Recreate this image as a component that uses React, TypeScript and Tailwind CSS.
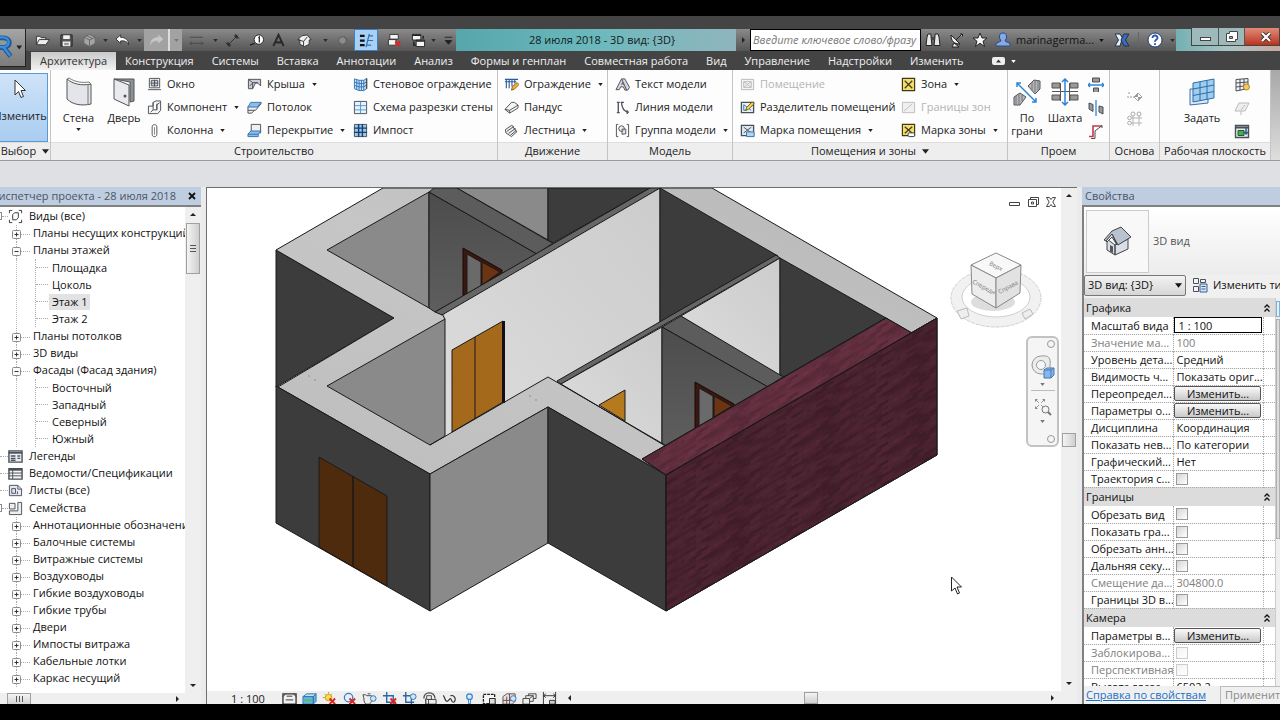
import type { ReactNode } from "react";
import { clsx } from "clsx";

/* ---------- icons (16x16 grid) ---------- */

const INK = "#4b4f57";
const BLUE = "#2f74b5";

const ICONS: Record<string, ReactNode> = {
  open: <path d="M1.500 12.500V3.500h4l1 1.500h5v2M1.500 12.500l3-5.500h11l-4 5.500z" fill="#eee" stroke="#333" />,
  save: (
    <>
      <path d="M2 2h12v12H2z" fill="#555" stroke="#222" />
      <path d="M4.500 2.500h7v4h-7zM4 9h8v5H4z" fill="#f2f2f2" />
      <path d="M5.500 11h5M5.500 12.500h5" stroke="#777" />
    </>
  ),
  cloud: (
    <>
      <path d="M8 1.500l6 3v6.500L8 14.500 2 11V4.500z" fill="#a5a5a5" stroke="#666" />
      <path d="M2 4.500l6 3 6-3M8 7.500v7M5 3l6 3" stroke="#666" fill="none" />
    </>
  ),
  undo: <path d="M6 2L1 6.500 6 11V8.500c4-.500 7 .500 8.500 4C14.500 7.500 11 4.800 6 4.600z" fill="#fff" stroke="#333" />,
  redo: <path d="M10 2l5 4.500-5 4.500V8.500c-4-.500-7 .500-8.500 4C1.500 7.500 5 4.800 10 4.600z" fill="#c8c8c8" stroke="#bbb" />,
  measure: <path d="M1 4.500h14M1 11h14M3 9l-2 2 2 2M13 9l2 2-2 2" stroke="#4a4a4a" fill="none" />,
  dim: <path d="M3 13L13 3M1 10l4 5M11 1l4 5M5 11l-2 2M3 10v3h3z M10 3h3v3z" stroke="#2e2e2e" fill="#2e2e2e" />,
  tag: (
    <>
      <circle cx="10.500" cy="7" r="5" fill="#fff" stroke="#222" />
      <path d="M1 13l5-2M10 5l1-.800V10" stroke="#222" fill="none" strokeWidth="1.300" />
    </>
  ),
  letterA: <path d="M2.500 14L8 2l5.500 12M4.500 10h7" stroke="#2b2b2b" strokeWidth="2.200" fill="none" />,
  house: (
    <>
      <path d="M1 7l4-4 6-1 4 5-2 .500V12l-5 2.500L3 12V7.500z" fill="#eee" stroke="#333" />
      <path d="M1 7l6 2 4-5M7 9v5" stroke="#333" fill="none" />
    </>
  ),
  section: (
    <>
      <path d="M2 8h4M10 4l5 4-5 4z" fill="#666" stroke="#666" />
      <circle cx="8" cy="8" r="4" fill="#8c8c8c" stroke="#5c5c5c" />
    </>
  ),
  thin: (
    <>
      <path d="M1 3h5M1 8h5M1 13h5" stroke="#111" strokeWidth="2.400" />
      <path d="M10 3h5M9 8h6M8 13h5M11 1L7.500 15" stroke={BLUE} strokeWidth="1.300" />
    </>
  ),
  closeHidden: (
    <>
      <path d="M3 1.500h9v5H3zM1.500 7h8v6h-8z" fill="#f4f4f4" stroke="#333" />
      <path d="M9 9l5 5M14 9l-5 5" stroke="#d02a2a" strokeWidth="2.200" />
    </>
  ),
  switchWin: (
    <>
      <path d="M1.500 1.500h9v6h-9zM5.500 7.500h9v7h-9z" fill="#f4f4f4" stroke="#222" />
      <path d="M1.500 2.500h9M5.500 8.500h9M3 9v4h2M13 6V3" stroke="#222" fill="none" strokeWidth="1.500" />
    </>
  ),
  customize: <path d="M4 4.500h8M4.500 8h7L8 12z" fill="#222" stroke="#222" />,
  binoculars: (
    <>
      <path d="M3 2h3v3l1 8.500H1L2 5zM10 2h3l1 3 1 8.500H9L10 5z" fill="#e8e8e8" stroke="#222" />
      <path d="M6.500 5h3v3h-3z" fill="#444" />
    </>
  ),
  dish: <path d="M2 3c0 6 3 9 9 9L6.500 7.500zM7 8l6-6M11 2h2.500v2.500M5 11l-2 4h7z" fill="#eee" stroke="#222" />,
  star: <path d="M8 1l2 5h5l-4 3.300 1.600 5.200L8 11.300l-4.600 3.200L5 9.300 1 6h5z" fill="#f5f5f5" stroke="#222" />,
  user: <path d="M8 1c3 0 4 2 3.500 5L10 9l5 2.500V14H1v-2.500L6 9 4.500 6C4 3 5 1 8 1z" fill="#86a9e8" stroke="#2c4a86" />,
  exchange: (
    <>
      <path d="M1 2h5l2.500 4L6 14H1l3.500-6z" fill="#e8eef8" stroke="#234" />
      <path d="M15 2h-5L7 8l3 6h5l-3.500-6z" fill="#3a6bc0" stroke="#234" />
    </>
  ),
  help: (
    <>
      <circle cx="8" cy="8" r="7" fill="#fff" stroke="#1d3c78" />
      <path d="M5.500 6c0-3.500 5.300-3 5 0-.200 1.700-2.500 1.600-2.500 3.800M8 11.200V13" stroke="#2a55a8" strokeWidth="1.900" fill="none" />
    </>
  ),
  window: (
    <>
      <path d="M2.500 1.500h11v10h-11zM1 13.500h14" fill="#fff" stroke={INK} />
      <path d="M4.500 3.500h7v6h-7zM8 3v7M4 6.500h8" fill="#c9ccd6" stroke={INK} />
    </>
  ),
  component: <path d="M1.500 6.500h5v-4l3-1.500h5v10l-3 3.500h-10zM6.500 2.500v8h4V4M6.500 10.500L4 13M10.500 10.500V5l3-2" fill="#f5f5f5" stroke={INK} />,
  column: (
    <>
      <path d="M5.500 4c0-3 5-3 5 0v8c0 3.500-5 3.500-5 0z" fill="#fff" stroke={INK} />
      <path d="M8 4.500v8" stroke="#888" />
    </>
  ),
  roof: (
    <>
      <path d="M1.500 2.500h13v7l-3-3H9l-3 6H1.500z" fill="#ccced4" stroke={INK} />
      <path d="M1.500 2.500L6 6h5.500M6 6v6.500M3 9.500l3-3" stroke={INK} fill="none" />
    </>
  ),
  ceiling: (
    <>
      <path d="M1 7v4h8l6-7V2.500M1 11v3h4l3-3" stroke={INK} fill="#eee" />
      <path d="M4 2.500h11l-4 5H1z" fill="#8fbce8" stroke={BLUE} />
    </>
  ),
  floor: (
    <>
      <path d="M4.500 1.500h10v9h-10z" fill="#eef1f4" stroke={INK} />
      <path d="M1 12l3-3.500h11L12 12v2.500H1z" fill="#8fbce8" stroke={BLUE} />
      <path d="M1 12h11" stroke={BLUE} />
    </>
  ),
  curtain: (
    <>
      <path d="M1.500 2l5 1.500h5l3-2v11l-3 2h-5l-5-2z" fill="#cfe4f7" stroke={BLUE} />
      <path d="M4 3v10.500M6.500 3.500v11M9 3.500v11M11.500 3.500v11M1.500 5.500l5 1.500h5l3-2M1.500 9l5 1.500h5l3-2" stroke={BLUE} fill="none" />
      <path d="M14.500 1.500v11" stroke={INK} strokeWidth="1.500" />
    </>
  ),
  grid: (
    <>
      <path d="M1.500 1.500h13v13h-13z" fill="#e8f2fb" stroke={INK} />
      <path d="M8 2v12M2 6h12M2 10.500h12" stroke="#4c97d8" />
    </>
  ),
  mullion: (
    <>
      <path d="M1.500 1.500h13v13h-13z" fill="#9cc6ea" stroke={INK} />
      <path d="M6 1v14M10 1v14M1 5.500h14M1 10h14" stroke="#173f70" strokeWidth="1.500" />
    </>
  ),
  railing: (
    <>
      <path d="M1 2.500h14M1 5h12M2.500 2v10M5.500 2v10M8.500 2v8M11.500 2v5" stroke="#2c5b9c" strokeWidth="1.200" />
      <path d="M8 14l1-4 5-4 2 2-5 5z" fill="#f4b23a" stroke="#8a5a10" />
    </>
  ),
  ramp: <path d="M1 10L8 2.500h3l4 3v3L6 14zM1 10l5 1M6 14v-3l9-5.500" fill="#f5f5f5" stroke={INK} />,
  stair: <path d="M1.500 7L8 2.500l2 1v2l2 .500v2l2 1-6 5.500-6-4zM3 9l7-5M5 11l7-5M7 13l6-5" fill="#eee" stroke={INK} />,
  modelText: (
    <>
      <path d="M1 13.500L7 2h3.500l5 9-2 3h-3L9 10.500H6l-1.500 3z" fill="#d5d7dc" stroke={INK} />
      <path d="M7 2l5.500 12M7 8l1-2 1 2.500" stroke={INK} fill="none" />
    </>
  ),
  modelLine: <path d="M3.500 2v12M2 2.500h3M2 13.500h3M7 2c0 6 2 10 8 11M9.500 2.500H6M13 11v4" stroke={INK} fill="none" strokeWidth="1.400" />,
  modelGroup: (
    <>
      <path d="M3.500 1.500h-2v13h2M12.500 1.500h2v13h-2" stroke={INK} fill="none" />
      <circle cx="7" cy="6" r="3" fill="#eee" stroke={INK} />
      <path d="M7.500 6.500h4v5l-4 .500z" fill="#ddd" fillOpacity=".7" stroke={INK} />
    </>
  ),
  roomOff: <path d="M1.500 2.500h13v11h-13zM4 5h8v6H4zM4 5l8 6M12 5l-8 6" fill="#f3f3f3" stroke="#b9b9b9" />,
  roomSplit: (
    <>
      <path d="M1.500 2.500h13v11h-13z" fill="#e8f1f8" stroke={INK} strokeWidth="1.400" />
      <path d="M4 5v6h3M4 5l8 6" stroke={BLUE} fill="none" />
      <path d="M6 11l1-3 6-6 2 2-6 6z" fill="#f7d34a" stroke="#6b5510" />
    </>
  ),
  roomTag: (
    <>
      <path d="M1.500 2.500h13v11h-13z" fill="#dfe9f2" stroke={INK} strokeWidth="1.400" />
      <path d="M4 4.500l8 6M12 4.500l-8 6" stroke={INK} />
      <path d="M7 9.500h8v5H7z" fill="#b9d3ea" stroke={BLUE} />
    </>
  ),
  zone: <path d="M1.500 1.500h13v13h-13zM4 4l8 8M12 4l-8 8" fill="#f5df6a" stroke="#3f3a1c" strokeWidth="1.300" />,
  zoneOff: <path d="M1.500 2.500h13v11h-13zM3 12l9-8" fill="#f0f0f0" stroke="#bdbdbd" />,
  zoneTag: (
    <>
      <path d="M1.500 1.500h13v12h-13zM4 4l8 7M12 4l-8 7" fill="#f5df6a" stroke="#3f3a1c" strokeWidth="1.300" />
      <rect x="7.500" y="10.500" width="7" height="4" rx="1.500" fill="#fff" stroke="#334" />
    </>
  ),
  openWall: (
    <>
      <path d="M4.500 1h7v4h-7zM5.500 15v-4h5v4" fill="#999" stroke={INK} />
      <path d="M0 8h16M2 6L0 8l2 2M14 6l2 2-2 2" stroke="#2e86d8" fill="none" strokeWidth="1.300" />
    </>
  ),
  openVert: (
    <>
      <path d="M1 3l4 1.500v7L1 9zM11 6l4 1v7l-4-2z" fill="#999" stroke={INK} />
      <path d="M8 0v16" stroke="#2e86d8" strokeWidth="1.300" />
    </>
  ),
  dormer: (
    <>
      <path d="M1 13.500h4V3h9" stroke="#c23a4c" fill="none" strokeWidth="1.600" />
      <path d="M3 15.500h4V8l7-5.500V5" stroke={INK} fill="none" />
    </>
  ),
  level: (
    <>
      <path d="M0 9h7M2 4v3" stroke="#999" strokeDasharray="2 1" />
      <path d="M11 5l4 4-4 4-4-4z" fill="#fff" stroke="#aaa" />
      <path d="M11 5v4H7zM11 13V9h4z" fill="#999" />
    </>
  ),
  axes: (
    <>
      <path d="M6 4v11M12 4v11M3 7h12M3 12h12" stroke="#b5b5b5" />
      <circle cx="6" cy="3" r="2" fill="#fff" stroke="#aaa" />
      <circle cx="12" cy="3" r="2" fill="#fff" stroke="#aaa" />
      <circle cx="2.500" cy="7" r="1.800" fill="#fff" stroke="#aaa" />
      <circle cx="2.500" cy="12" r="1.800" fill="#fff" stroke="#aaa" />
    </>
  ),
  planeShow: (
    <>
      <path d="M2 2.500l12-1v10L2 14zM6 2v11.500M10 2v10.500M2 6l12-1M2 10l12-1.500" fill="#f2f2f2" stroke={INK} />
      <circle cx="12.500" cy="10" r="3" fill="#f6c95a" stroke="#b3862a" />
    </>
  ),
  planeRef: <path d="M5 3h10l-4 8H1zM7 11v4M11 5l-4 5" fill="#eee" stroke="#bbb" />,
  planeView: (
    <>
      <path d="M1.500 2.500h13v12h-13z" fill="#e6efe6" stroke={INK} strokeWidth="1.400" />
      <path d="M2 4.500h12" stroke={INK} strokeWidth="2" />
      <path d="M4 7.500h6v5H4z" fill="#4ca85a" stroke="#225c2c" />
      <path d="M12 5v6M10 9l2 2 2-2" stroke="#2b5d8f" fill="none" strokeWidth="1.500" />
    </>
  ),
  viewsRoot: (
    <>
      <path d="M1.500 4.500v-3h3M11.500 1.500h3v3M14.500 11.500v3h-3M4.500 14.500h-3v-3" stroke="#333" fill="none" />
      <path d="M5 6l2-2h4v5l-2 2.500H5z" fill="#fff" stroke="#333" />
    </>
  ),
  legends: (
    <>
      <path d="M1 2h14v12H1z" fill="#eceef2" stroke={INK} strokeWidth="1.500" />
      <path d="M1 4h14" stroke={INK} strokeWidth="2" />
      <path d="M3 7.500h5M3 10h5M3 12h5M10 7.500h3M10 10h3" stroke="#456" strokeWidth="1.500" />
    </>
  ),
  schedules: (
    <>
      <path d="M1 3h14v11H1z" fill="#f4f4f4" stroke={INK} strokeWidth="1.500" />
      <path d="M1 4h14" stroke={INK} strokeWidth="2" />
      <path d="M5 3v11M1 7.500h14M1 10.500h14" stroke={INK} />
    </>
  ),
  sheets: <path d="M1.500 2.500h9l4 4v7h-13zM10.500 2.500v4h4M4 6h4v5H4zM10 9v3" fill="#e3e8f2" stroke={INK} />,
  families: <path d="M1.500 2.500h6v6h-6zM10.500 1.500h4v13h-13v-4h9z" fill="#eee" stroke={INK} />,
  typeEdit: (
    <>
      <path d="M1.500 1.500h5v5h-5zM8.500 2.500h5v3h-5zM1.500 9.500h5v5h-5z" fill="#f4f4f4" stroke={INK} />
      <path d="M8 7h7v8H8z" fill="#dbe7f5" stroke="#345f9a" />
      <path d="M9.500 9.500h4M9.500 12h4" stroke="#345f9a" />
    </>
  ),
  sheetSize: (
    <>
      <path d="M1 3h14v11H1z" fill="#f0f0f0" stroke="#333" strokeWidth="1.400" />
      <path d="M4 9.500h8M1 6l3-3M15 6l-3-3M5 5.500h6" stroke="#333" fill="none" />
    </>
  ),
  vcCube: (
    <>
      <path d="M1 6l4-3h10l-3 3z" fill="#bfe0f5" stroke={BLUE} />
      <path d="M1 6h11v8H1zM12 6l3-3v8l-3 3z" fill="#6bb3dc" stroke={BLUE} />
      <path d="M2 10h9" stroke="#4cc06c" strokeWidth="2" />
    </>
  ),
  vcSun: (
    <>
      <circle cx="7" cy="7" r="3.500" fill="#f7e04b" stroke="#c59a18" />
      <path d="M7 1v2M1 7h2M3 3l1 1M11 3l-1 1" stroke="#c59a18" />
      <path d="M8 8l6 6M14 8l-6 6" stroke="#d22" strokeWidth="2" />
    </>
  ),
  vcShadow: (
    <>
      <circle cx="7" cy="7" r="4.500" fill="#e4effa" stroke="#3b7dc0" strokeWidth="1.300" />
      <path d="M8 8l6 6M14 8l-6 6" stroke="#d22" strokeWidth="2" />
    </>
  ),
  vcRender: (
    <>
      <path d="M1 4h3l1 1h5c2 3 0 7-2 9H4C1 11 3 9 1 4zM6 3h3" fill="#eee" stroke="#444" />
      <circle cx="12" cy="8" r="3" fill="#cfe5f8" stroke={BLUE} />
    </>
  ),
  vcCrop: (
    <>
      <path d="M5 1v11h10M1 5h11v9" stroke="#2c67a8" fill="none" strokeWidth="1.500" />
      <path d="M9 8l6 6M15 8l-6 6" stroke="#d22" strokeWidth="2" />
    </>
  ),
  vcCropShow: (
    <>
      <path d="M4 1v11h9M1 5h9v9" stroke="#2c67a8" fill="none" strokeWidth="1.500" />
      <circle cx="12" cy="6" r="3" fill="#cfe5f8" stroke={BLUE} />
    </>
  ),
  vcLock: (
    <>
      <path d="M2 8c0-8 11-8 12 0M4 8v6h7" fill="none" stroke="#444" strokeWidth="1.300" />
      <path d="M7 9h8v5H7zM5 5h5v4H5z" fill="#eee" stroke="#444" />
    </>
  ),
  vcGlasses: <path d="M1 5c2 0 2 6 4 6s3-3 4-3 1 4 3 4 3-4 1-6-3-1-4-1" fill="none" stroke="#333" strokeWidth="1.300" />,
  vcBulb: (
    <>
      <circle cx="8" cy="6" r="3" fill="#dcecfb" stroke="#2f7fd0" strokeWidth="1.300" />
      <path d="M7 9.500v4h2v-4" stroke="#2f7fd0" fill="#fff" />
    </>
  ),
  vcTemp: (
    <>
      <path d="M1.500 3.500h12v10h-12z" fill="#f4f4f4" stroke="#222" strokeWidth="1.400" strokeDasharray="3 1" />
      <path d="M8 8h6v6H8z" fill="#ddd" stroke="#222" />
    </>
  ),
  vcAnalyt: (
    <>
      <path d="M1 6l4-3h9v8l-3 3H1zM1 10h10M5 6v8M8 3v11" fill="#f3d9d9" stroke="#555" />
      <circle cx="12" cy="8" r="3" fill="#cfe5f8" stroke={BLUE} />
    </>
  ),
  vcBoxes: <path d="M1 8h7v6H1zM4 8V5h8v6H8M7 5V3h8v5h-3M8 8l4-3" fill="#eee" stroke="#444" />,
  vcConstraint: (
    <>
      <path d="M1.500 1v14M14.500 1v14M1.500 5h13M4 3L1.500 5 4 7M12 3l2.500 2L12 7" stroke="#333" fill="none" />
      <path d="M8 10h6v4H8z" fill="#ccc" stroke="#333" />
    </>
  ),
};

function Icon({ name, className = "size-4" }: { name: string; className?: string }) {
  return (
    <svg viewBox="0 0 16 16" className={clsx("shrink-0", className)} fill="none" aria-hidden="true">
      {ICONS[name]}
    </svg>
  );
}

function Caret({ className = "h-[3px] w-[5px]" }: { className?: string }) {
  return (
    <svg viewBox="0 0 6 4" className={clsx("shrink-0", className)} aria-hidden="true">
      <path d="M0 0h6L3 4z" fill="currentColor" />
    </svg>
  );
}

function Arrow({ dir }: { dir: "up" | "down" | "left" | "right" }) {
  const d = {
    up: "M1 5h6L4 2z",
    down: "M1 3h6L4 6z",
    left: "M5 1v6L2 4z",
    right: "M3 1v6l3-3z",
  }[dir];
  return (
    <svg viewBox="0 0 8 8" className="size-2 shrink-0" aria-hidden="true">
      <path d={d} fill="#222" />
    </svg>
  );
}

/* ---------- title bar and tabs ---------- */

type Tool = { icon?: string; w: string; label: string; state?: string };

const QUICK_TOOLS: Tool[] = [
  { icon: "open", w: "w-6", label: "Открыть" },
  { icon: "save", w: "w-6", label: "Сохранить" },
  { icon: "cloud", w: "w-[22px]", label: "Синхронизация" },
  { w: "w-[10px]", label: "Список синхронизации" },
  { icon: "undo", w: "w-6", label: "Отменить" },
  { w: "w-[10px]", label: "Список отмены" },
  { icon: "redo", w: "w-6", label: "Повторить", state: "bg-[#a2a2a2]" },
  { w: "w-[14px]", label: "Список повтора", state: "bg-[#a2a2a2] border-l-2 border-[#ddd] text-[#777]" },
  { icon: "measure", w: "w-7", label: "Измерить" },
  { w: "w-[10px]", label: "Список измерений" },
  { icon: "dim", w: "w-6", label: "Размер" },
  { icon: "tag", w: "w-6", label: "Марка" },
  { icon: "letterA", w: "w-5", label: "Текст" },
  { icon: "house", w: "w-8", label: "3D вид" },
  { w: "w-[10px]", label: "Список 3D видов" },
  { icon: "section", w: "w-6", label: "Разрез" },
  { icon: "thin", w: "w-6", label: "Тонкие линии", state: "bg-[#a9d0f5] border border-[#3d7fc0]" },
  { icon: "closeHidden", w: "w-8", label: "Закрыть скрытые окна" },
  { icon: "switchWin", w: "w-4", label: "Переключить окна" },
  { w: "w-[14px]", label: "Список окон" },
  { icon: "customize", w: "w-4", label: "Настроить панель" },
];

function TitleBar() {
  return (
    <div className="flex h-[22px] items-stretch bg-linear-to-b from-[#8a8a8a] to-[#565656] pl-1 text-[#2a2a2a]">
      {QUICK_TOOLS.map((tool) => (
        <button
          key={tool.label}
          aria-label={tool.label}
          className={clsx("flex shrink-0 items-center justify-center", tool.w, tool.state)}
        >
          {tool.icon ? <Icon name={tool.icon} className="size-[15px]" /> : <Caret />}
        </button>
      ))}
      <h1 className="flex min-w-0 flex-1 items-center justify-center truncate bg-linear-to-r from-[#56a6ab] via-[#6cb9bd] to-[#8fb5bd] pl-3 text-[11px] text-[#101c20]">
        28 июля 2018 - 3D вид: {"{3D}"}
      </h1>
      <div className="flex w-[14px] items-center justify-center">
        <Arrow dir="right" />
      </div>
      <input
        aria-label="Поиск"
        placeholder="Введите ключевое слово/фразу"
        className="w-[171px] border border-black bg-white px-[2px] text-[11px] italic placeholder:text-[#777]"
      />
      <div className="flex w-[255px] shrink-0 items-center">
        <button aria-label="Найти" className="flex w-6 justify-center"><Icon name="binoculars" /></button>
        <button aria-label="Центр связи" className="flex w-6 justify-center"><Icon name="dish" /></button>
        <button aria-label="Избранное" className="flex w-[22px] justify-center"><Icon name="star" /></button>
        <button className="flex items-center gap-[5px] pl-1 text-[11px] text-[#111]">
          <Icon name="user" />
          <span className="w-[78px] text-left">marinagerma...</span>
          <Caret />
        </button>
        <button aria-label="Exchange Apps" className="ml-[6px] flex w-6 justify-center"><Icon name="exchange" /></button>
        <button aria-label="Справка" className="ml-[4px] flex w-8 justify-center border-l border-[#666]"><Icon name="help" /></button>
        <Caret />
      </div>
      <div className="flex w-[104px] shrink-0 justify-end bg-linear-to-r from-[#74b0b2] via-[#a9c5c6] to-[#c6a8a2]">
        <div className="-mt-[2px] flex h-[19px] items-stretch border border-[#444]">
          <button aria-label="Свернуть" className="flex w-[26px] items-center justify-center bg-[#9db9ba]">
            <span className="mt-1 h-[4px] w-[11px] border border-[#444] bg-white" />
          </button>
          <button aria-label="Восстановить" className="flex w-[26px] items-center justify-center border-l border-[#555] bg-[#9db9ba]">
            <svg viewBox="0 0 12 12" className="size-3" aria-hidden="true">
              <path d="M3.500.500h8v8h-2v2h-9v-8h3z" fill="#fff" stroke="#444" />
              <path d="M3.500 5.500h3v2h-3z" fill="#9bb" stroke="#444" />
            </svg>
          </button>
          <button aria-label="Закрыть" className="flex w-[35px] items-center justify-center border-l border-[#555] bg-linear-to-b from-[#e08a78] to-[#b8301c] pl-2">
            <svg viewBox="0 0 12 10" className="h-[10px] w-3" aria-hidden="true">
              <path d="M2 1l8 8M10 1L2 9" stroke="#333" strokeWidth="4" />
              <path d="M2 1l8 8M10 1L2 9" stroke="#fff" strokeWidth="2.200" />
            </svg>
          </button>
        </div>
      </div>
    </div>
  );
}

const TABS = [
  "Архитектура", "Конструкция", "Системы", "Вставка", "Аннотации", "Анализ", "Формы и генплан",
  "Совместная работа", "Вид", "Управление", "Надстройки", "Изменить",
];

function Header() {
  return (
    <header className="flex bg-[#444] pt-[13px]">
      <button aria-label="Меню приложения" className="relative flex h-[38px] w-[26px] shrink-0 overflow-hidden border-r border-b border-[#222] bg-linear-to-b from-[#a5a5a5] to-[#7c7c7c]">
        <svg viewBox="0 0 26 38" className="h-full w-full" aria-hidden="true">
          <path d="M-3 9h6c9 0 9 10 0 10h-6M4 19l7 9" fill="none" stroke="#1c5a9c" strokeWidth="5" />
          <path d="M-3 8.500h6c8 0 8 10 0 10h-6M4 19l6.500 8.500" fill="none" stroke="#3c8fd6" strokeWidth="2.500" />
          <path d="M17 17h6l-3 4z" fill="#222" />
        </svg>
      </button>
      <div className="min-w-0 flex-1">
        <TitleBar />
        <nav className="flex h-[19px] items-end pl-[5px]">
          {TABS.map((tab, i) => (
            <button
              key={tab}
              className={clsx(
                "h-[18px] px-[9px] text-[11px] leading-[18px] whitespace-nowrap",
                i === 0 ? "bg-linear-to-b from-[#c9c9c9] to-[#f2f2f2] text-[#333]" : "text-[#f0f0f0]",
              )}
            >
              {tab}
            </button>
          ))}
          <button aria-label="Свернуть ленту" className="ml-5 flex h-[18px] items-center gap-[6px] text-white">
            <svg viewBox="0 0 13 8" className="h-2 w-[13px]" aria-hidden="true">
              <rect width="13" height="8" rx="2" fill="#eee" />
              <path d="M4 5.500h5L6.500 2.500z" fill="#333" />
            </svg>
            <Caret />
          </button>
        </nav>
      </div>
    </header>
  );
}

/* ---------- ribbon ---------- */

type Cmd = { icon: string; label: string; menu?: boolean; off?: boolean };

function CmdColumn({ items, className }: { items: Cmd[]; className?: string }) {
  return (
    <div className={clsx("flex shrink-0 flex-col", className)}>
      {items.map((c) => (
        <button
          key={c.label}
          disabled={c.off}
          className={clsx("flex h-[23px] items-center gap-[5px] whitespace-nowrap", c.off && "text-[#b4b4b4]")}
        >
          <Icon name={c.icon} className="size-[15px]" />
          {c.label}
          {c.menu && <span className="pl-[2px]"><Caret /></span>}
        </button>
      ))}
    </div>
  );
}

function BigButton({ label, className, menu, children }: { label: string; className?: string; menu?: boolean; children: ReactNode }) {
  return (
    <button className={clsx("flex shrink-0 flex-col items-center text-center leading-[13px]", className)}>
      <span className="flex h-[38px] items-center">{children}</span>
      {label}
      {menu && <span className="pt-1"><Caret /></span>}
    </button>
  );
}

function Panel({ title, menu, className, children }: { title: string; menu?: boolean; className?: string; children: ReactNode }) {
  return (
    <section className="flex min-w-0 flex-col border-r border-[#c4c4c4]">
      <div className={clsx("flex h-[72px] overflow-hidden pt-[3px]", className)}>{children}</div>
      <h2 className="flex h-[18px] items-center justify-center gap-[6px] border-t border-[#ddd] bg-[#eeeeef] whitespace-nowrap">
        {title}
        {menu && <Caret className="h-[5px] w-[7px]" />}
      </h2>
    </section>
  );
}

function IconColumn({ items, className }: { items: [string, string][]; className?: string }) {
  return (
    <div className={clsx("flex shrink-0 flex-col", className)}>
      {items.map(([icon, label]) => (
        <button key={icon} aria-label={label} className="flex h-[23px] items-center justify-center">
          <Icon name={icon} />
        </button>
      ))}
    </div>
  );
}

function Ribbon() {
  return (
    <div className="grid grid-cols-[51fr_447fr_110fr_125fr_275fr_102fr_50fr_111fr_9fr] border-b border-[#9a9a9a] bg-[#fdfdfd] text-[11px] text-[#222]">
      <Panel title="Выбор" menu>
        <button className="-ml-2 flex w-[56px] shrink-0 flex-col items-center border border-[#5b9bd5] bg-linear-to-b from-[#cfe3f8] to-[#a9cdf1]">
          <svg viewBox="0 0 14 22" className="mt-1 mb-2 h-[22px] w-[14px]" aria-hidden="true">
            <path d="M2 2v15l3.500-3.500L8 19.500l2.500-1L8 12.500h4.500z" fill="#fff" stroke="#333" />
          </svg>
          Изменить
        </button>
      </Panel>

      <Panel title="Строительство">
        <BigButton label="Стена" className="w-[55px]" menu>
          <svg viewBox="0 0 28 30" className="h-[30px] w-7" aria-hidden="true">
            <path d="M2 2c6 5 14 7 24 5v20c-9 2-18 1-24-5z" fill="#e3e5ea" stroke="#555" />
            <path d="M2 2l2-1c6 4 13 5 20 4l2 2M23 8v19" fill="none" stroke="#777" />
          </svg>
        </BigButton>
        <BigButton label="Дверь" className="w-[36px]">
          <svg viewBox="0 0 24 30" className="h-[30px] w-6" aria-hidden="true">
            <path d="M2 2h20v22l-4 1V5z" fill="#8d9099" stroke="#555" />
            <path d="M2 2l15 6v21L2 22z" fill="#e8eaee" stroke="#555" />
            <circle cx="13" cy="19" r="1.500" fill="#555" />
          </svg>
        </BigButton>
        <CmdColumn
          className="ml-[5px] w-[100px]"
          items={[
            { icon: "window", label: "Окно" },
            { icon: "component", label: "Компонент", menu: true },
            { icon: "column", label: "Колонна", menu: true },
          ]}
        />
        <CmdColumn
          className="w-[106px]"
          items={[
            { icon: "roof", label: "Крыша", menu: true },
            { icon: "ceiling", label: "Потолок" },
            { icon: "floor", label: "Перекрытие", menu: true },
          ]}
        />
        <CmdColumn
          items={[
            { icon: "curtain", label: "Стеновое ограждение" },
            { icon: "grid", label: "Схема разрезки стены" },
            { icon: "mullion", label: "Импост" },
          ]}
        />
      </Panel>

      <Panel title="Движение" className="pl-[6px]">
        <CmdColumn
          items={[
            { icon: "railing", label: "Ограждение", menu: true },
            { icon: "ramp", label: "Пандус" },
            { icon: "stair", label: "Лестница", menu: true },
          ]}
        />
      </Panel>

      <Panel title="Модель" className="pl-[7px]">
        <CmdColumn
          items={[
            { icon: "modelText", label: "Текст модели" },
            { icon: "modelLine", label: "Линия модели" },
            { icon: "modelGroup", label: "Группа модели", menu: true },
          ]}
        />
      </Panel>

      <Panel title="Помещения и зоны" menu className="pl-[7px]">
        <CmdColumn
          className="w-[161px]"
          items={[
            { icon: "roomOff", label: "Помещение", off: true },
            { icon: "roomSplit", label: "Разделитель помещений" },
            { icon: "roomTag", label: "Марка помещения", menu: true },
          ]}
        />
        <CmdColumn
          items={[
            { icon: "zone", label: "Зона", menu: true },
            { icon: "zoneOff", label: "Границы зон", off: true },
            { icon: "zoneTag", label: "Марка зоны", menu: true },
          ]}
        />
      </Panel>

      <Panel title="Проем">
        <BigButton label="По грани" className="w-[38px]">
          <svg viewBox="0 0 28 28" className="size-7" aria-hidden="true">
            <path d="M15 8l6-6 6 1v8l-5 5zM1 19l6-4 6 4-6 8H1z" fill="#b4b6bb" stroke="#555" />
            <path d="M19 4v8M22 3v11M25 3v9M3 18v8M6 16v10M9 17v6" stroke="#777" />
            <path d="M4 5l19 19M4 9V5h4M23 20v4h-4" stroke="#2e86d8" fill="none" strokeWidth="1.500" />
          </svg>
        </BigButton>
        <BigButton label="Шахта" className="w-[38px]">
          <svg viewBox="0 0 28 28" className="size-7" aria-hidden="true">
            <path d="M1 5h8v5H1zM19 5h8v5h-8zM1 17h8v5H1zM19 17h8v5h-8z" fill="#999" stroke="#555" />
            <path d="M1 13.500h26M9.500 5v18M18.500 5v18" stroke="#555" />
            <path d="M14 2v24M11 4l3-3 3 3M11 24l3 3 3-3" stroke="#2e86d8" fill="none" strokeWidth="1.500" />
          </svg>
        </BigButton>
        <IconColumn
          className="w-6"
          items={[["openWall", "Проем в стене"], ["openVert", "Вертикальный проем"], ["dormer", "Слуховое окно"]]}
        />
      </Panel>

      <Panel title="Основа" className="justify-center">
        <IconColumn className="justify-center" items={[["level", "Уровень"], ["axes", "Ось"]]} />
      </Panel>

      <Panel title="Рабочая плоскость">
        <BigButton label="Задать" className="ml-[14px] w-[56px]">
          <svg viewBox="0 0 28 30" className="h-[30px] w-7" aria-hidden="true">
            <path d="M2 12h5v10h13v4L2 28z" fill="#dfeaf5" stroke="#3a6ea8" />
            <path d="M5 6l21-4v19L5 25z" fill="#9fcdf0" stroke="#2d6ca8" />
            <path d="M12 5v18.500M19 3.500V22M5 12l21-4M5 18.500l21-4" stroke="#2d6ca8" />
          </svg>
        </BigButton>
        <IconColumn
          className="w-6"
          items={[["planeShow", "Показать"], ["planeRef", "Опорная плоскость"], ["planeView", "Просмотр"]]}
        />
      </Panel>
      <div className="bg-linear-to-b from-[#a8a8a8] to-[#dedede]" />
    </div>
  );
}

/* ---------- project browser ---------- */

type Node = { label: string; open?: boolean; icon?: string; selected?: boolean; children?: Node[] };

const leaf = (label: string): Node => ({ label });

const TREE: Node[] = [
  {
    label: "Виды (все)",
    icon: "viewsRoot",
    children: [
      leaf("Планы несущих конструкций"),
      {
        label: "Планы этажей",
        open: true,
        children: [leaf("Площадка"), leaf("Цоколь"), { label: "Этаж 1", selected: true }, leaf("Этаж 2")],
      },
      leaf("Планы потолков"),
      leaf("3D виды"),
      {
        label: "Фасады (Фасад здания)",
        open: true,
        children: [leaf("Восточный"), leaf("Западный"), leaf("Северный"), leaf("Южный")],
      },
    ],
  },
  { label: "Легенды", icon: "legends" },
  { label: "Ведомости/Спецификации", icon: "schedules" },
  { label: "Листы (все)", icon: "sheets" },
  {
    label: "Семейства",
    icon: "families",
    children: [
      "Аннотационные обозначения", "Балочные системы", "Витражные системы", "Воздуховоды", "Гибкие воздуховоды",
      "Гибкие трубы", "Двери", "Импосты витража", "Кабельные лотки", "Каркас несущий",
    ].map(leaf),
  },
];

function Expander({ open }: { open?: boolean }) {
  return (
    <svg viewBox="0 0 21 17" className="h-[17px] w-[21px] shrink-0" aria-hidden="true">
      <path d="M4.500 0v17M9 9.500h9" stroke="#aaa" strokeDasharray="1 1" />
      <rect x=".5" y="5.500" width="8" height="8" rx="1" fill="#fafafa" stroke="#8a8a92" />
      <path d={open ? "M2.500 9.500h4" : "M2.500 9.500h4M4.500 7.500v4"} stroke="#333" />
    </svg>
  );
}

function Browser() {
  return (
    <aside className="flex w-[201px] shrink-0 flex-col overflow-hidden bg-white text-[11px] text-[#111]">
      <div className="flex h-[18px] shrink-0 items-center justify-between overflow-hidden bg-[#bfcde0] pr-[5px] text-[#4a5666]">
        <h2 className="-ml-[9px] whitespace-nowrap">Диспетчер проекта - 28 июля 2018</h2>
        <button aria-label="Закрыть диспетчер">
          <svg viewBox="0 0 8 8" className="size-2" aria-hidden="true">
            <path d="M1 1l6 6M7 1L1 7" stroke="#111" strokeWidth="1.800" />
          </svg>
        </button>
      </div>
      <div className="flex min-h-0 flex-1 border-t-2 border-[#808080]">
        <ul className="min-w-0 flex-1 overflow-hidden whitespace-nowrap">
          {TREE.map((root) => (
            <li key={root.label}>
              <div className={clsx("flex items-center", root.children ? "h-[18px]" : "h-[17px]")}>
                {root.children && <span className="h-2 w-[2px] border border-l-0 border-[#8a8a92]" />}
                <span className={clsx("border-t border-dotted border-[#aaa]", root.children ? "w-[6px]" : "w-2")} />
                <Icon name={root.icon!} className="mr-[6px] size-[15px]" />
                {root.label}
              </div>
              <ul>
                {root.children?.map((node) => (
                  <li key={node.label}>
                    <div className="flex h-[17px] items-center pl-3">
                      <Expander open={node.open} />
                      {node.label}
                    </div>
                    {node.children && (
                      <ul className="flex pb-px pl-4">
                        <li className="w-px border-l border-dotted border-[#bbb]" />
                        <li className="ml-[18px] min-w-0">
                          <ul className="border-l border-dotted border-[#aaa]">
                            {node.children.map((c) => (
                              <li key={c.label} className="flex h-[17px] items-center">
                                <span className="mr-[1px] w-3 border-t border-dotted border-[#aaa]" />
                                <span className={clsx("px-[3px] leading-4", c.selected && "bg-[#e2e2e4]")}>{c.label}</span>
                              </li>
                            ))}
                          </ul>
                        </li>
                      </ul>
                    )}
                  </li>
                ))}
              </ul>
            </li>
          ))}
        </ul>
        <div className="flex w-4 shrink-0 flex-col items-center bg-[#efefef]">
          <div className="flex h-4 items-center"><Arrow dir="up" /></div>
          <div className="flex h-[51px] w-[14px] flex-col items-center justify-center gap-[2px] border border-[#a0a0a0] bg-linear-to-r from-[#f4f4f4] to-[#cfcfcf]">
            <i className="h-px w-[6px] bg-[#555]" />
            <i className="h-px w-[6px] bg-[#555]" />
            <i className="h-px w-[6px] bg-[#555]" />
          </div>
          <div className="mt-auto flex h-4 items-center"><Arrow dir="down" /></div>
        </div>
      </div>
      <div className="flex h-[11px] shrink-0 items-center justify-between bg-[#efefef] pr-5 pl-[7px]">
        <div className="flex h-[11px] w-6 items-center justify-center gap-[2px] border border-b-0 border-[#a0a0a0] bg-linear-to-b from-[#f4f4f4] to-[#d4d4d4]">
          <i className="h-[6px] w-px bg-[#555]" />
          <i className="h-[6px] w-px bg-[#555]" />
          <i className="h-[6px] w-px bg-[#555]" />
        </div>
        <Arrow dir="right" />
      </div>
    </aside>
  );
}

/* ---------- 3D view ---------- */

const BRICK_TONES = ["#5b2a39", "#43202c", "#6a3444", "#4e2431", "#3a1b26", "#613040", "#55303c"];

// Staggered courses of varied bricks, repeated over the wall.
const BRICKS = Array.from({ length: 20 * 8 }, (_, i) => {
  const row = Math.floor(i / 8);
  const col = i % 8;
  return {
    x: col * 12 + (row % 2) * 6 - 6,
    y: row * 3,
    w: 8 + ((i * 7) % 9),
    tone: BRICK_TONES[(i * i * 3 + row * 5 + col) % BRICK_TONES.length],
  };
});

function Building() {
  const dark = "#3c3c3c";
  const mid = "#8a8a8a";
  const band = "#666";
  return (
    <svg viewBox="207 188 854 503" className="block h-full w-full" role="img" aria-label="3D вид здания">
      <defs>
        <linearGradient id="top" x1="0" y1="1" x2="1" y2="0">
          <stop offset="0" stopColor="#bdbdbd" />
          <stop offset=".5" stopColor="#c6c6c6" />
          <stop offset="1" stopColor="#b6b6b6" />
        </linearGradient>
        <linearGradient id="light" x1="0" y1="1" x2="1" y2="0">
          <stop offset="0" stopColor="#dcdcdc" />
          <stop offset="1" stopColor="#cccccc" />
        </linearGradient>
        <linearGradient id="shade" x1="0" y1="0" x2="0" y2="1">
          <stop offset="0" stopColor="#4c4c4c" />
          <stop offset="1" stopColor="#5e5e5e" />
        </linearGradient>
        <pattern id="brick" width="90" height="60" patternUnits="userSpaceOnUse" patternTransform="skewY(-30)">
          <rect width="90" height="60" fill="#4d2431" />
          {BRICKS.map((b, i) => (
            <rect key={i} x={b.x} y={b.y} width={b.w} height="3" fill={b.tone} opacity=".45" />
          ))}
        </pattern>
      </defs>
      <g stroke="#1a1a1a" strokeWidth="1" strokeLinejoin="round">
        <path d="M276 250L394 318 276 387z" fill={dark} />
        <path d="M276 250L383 188H712L937 318 666 475 548 407 430 474 278 387 394 318z" fill="url(#top)" />

        {/* upper left room */}
        <path d="M327 250L429 192V308z" fill={mid} />
        <path d="M429 192L537 254 435 312 429 308z" fill="url(#shade)" />
        <path d="M434 188H457L547 240 553 243 537 254 429 192z" fill="#5c5c5c" />
        <path d="M457 188H548V240z" fill={mid} />
        <path d="M548 188H650L553 243 548 240z" fill={dark} />
        <path d="M463 248l39 22v4l-39 22z" fill="#3a1710" stroke="#1b0a06" />
        <path d="M467 254l14 8v24l-14 8z" fill="#6a6a6a" />
        <path d="M482 262l18 10-18 13z" fill="#6b3413" />

        {/* hall */}
        <path d="M435 312L650 188h10L442 315z" fill={band} />
        <path d="M445 314L660 189V322L557 382 548 377 447 436h-2z" fill="url(#light)" stroke="none" />
        <path d="M660 188V322M442 314L445 319" />
        <path d="M327 386L445 319V436L430 445z" fill={mid} />
        <path d="M660 188l118 68L660 323z" fill={dark} />
        <path d="M557 381L776 255l4 3L561 384z" fill={band} />
        <path d="M662 327l19-11L784 376 768 387z" fill="#5c5c5c" />
        <path d="M452 350l51-29v81l-51 30z" fill="#a5691c" />
        <path d="M475 337v82" />
        <path d="M503.500 321v82" stroke="#140d18" strokeWidth="3" />

        {/* right rooms */}
        <path d="M681 316L780 258V375z" fill="url(#light)" />
        <path d="M780 258L886 318 784 377 780 375z" fill={dark} />
        <path d="M561 384L662 327V444z" fill="url(#light)" />
        <path d="M599 405l26-15v31z" fill="#b57a1e" />
        <path d="M662 327L768 387 665 446 662 444z" fill="url(#shade)" />
        <path d="M695 382l39 22v3l-39 22z" fill="#3a1710" stroke="#1b0a06" />
        <path d="M699 388l14 8v22l-14 9z" fill="#6a6a6a" />
        <path d="M714 396l18 10-18 11z" fill="#6b3413" />
        <path d="M430 445L548 377 665 445" fill="none" />

        {/* facade */}
        <path d="M276 386L430 474V611L276 523z" fill={dark} />
        <path d="M430 474L548 407V543L430 611z" fill={mid} />
        <path d="M548 407L666 475V611L548 543z" fill={dark} />
        <path d="M319 457l68 39v90l-68-39z" fill="#4f2b0d" />
        <path d="M353 476v90" strokeWidth="1.500" />
        <path d="M642 459L886 318l26 15L666 475z" fill="url(#brick)" />
        <path d="M642 459L886 318l26 15L666 475z" fill="#a04a62" fillOpacity=".2" />
        <path d="M666 475L937 318V455L666 611z" fill="url(#brick)" />
        <path d="M666 475L937 318V455L666 611z" fill="#2a0f18" fillOpacity=".2" />
      </g>
      <g fill="#888">
        <circle cx="309" cy="376" r=".8" />
        <circle cx="315" cy="380" r=".8" />
        <circle cx="530" cy="396" r=".8" />
        <circle cx="536" cy="400" r=".8" />
      </g>

      {/* view cube */}
      <g>
        <ellipse cx="996" cy="298" rx="45" ry="29" fill="#f1f1f1" stroke="#cfcfcf" strokeDasharray="4 1" />
        <ellipse cx="996" cy="297" rx="34" ry="20" fill="#fff" stroke="#cfcfcf" />
        <ellipse cx="993" cy="302" rx="22" ry="9" fill="#ddd" />
        <path d="M971 265l25-12 25 12-25 13z" fill="#f8f8f8" stroke="#888" />
        <path d="M971 265l25 13v30l-24-14z" fill="#ededed" stroke="#888" />
        <path d="M1021 265l-25 13v30l24-15z" fill="#e2e2e2" stroke="#888" />
        <g fill="#777" fontSize="6" fontFamily="Open Sans, sans-serif" textAnchor="middle">
          <text transform="translate(983 289) rotate(28)">Спереди</text>
          <text transform="translate(1009 289) rotate(-28)">Справа</text>
          <text transform="translate(995 268) rotate(28)">Верх</text>
        </g>
        <path d="M957 311l10-3 2 8-8 3zM1022 313l8-4 3 5-8 5z" fill="#eee" stroke="#bbb" />
      </g>

      {/* cursor */}
      <path d="M951.500 577v14l3.500-3 2.500 6 2-1-2.500-6h4.500z" fill="#fff" stroke="#222" />
    </svg>
  );
}

function NavBar() {
  return (
    <div className="absolute top-[148px] right-[2px] flex h-[111px] w-[33px] flex-col items-center rounded-md border-2 border-[#c2c2c2] bg-[#f5f5f5] text-[#777]">
      <button aria-label="Закрыть панель" className="mt-[2px] mr-[2px] size-2 self-end rounded-full border border-[#999]" />
      <button aria-label="Штурвал" className="mt-[7px]">
        <svg viewBox="0 0 24 24" className="size-6" aria-hidden="true">
          <path d="M10 1c8-1 10 2 9 10v6c-2 3-5 2-9 2a9 9 0 010-18z" fill="#ececec" stroke="#999" />
          <circle cx="10" cy="10" r="4.500" fill="#f7f7f7" stroke="#999" />
          <path d="M13 15l3-2h7v7l-3 3h-7z" fill="#86b6ea" stroke="#4579b8" />
          <path d="M13 15h7v8M20 15l3-2" fill="none" stroke="#4579b8" />
        </svg>
      </button>
      <span className="pt-1"><Caret /></span>
      <div className="mt-1 w-6 border-t border-[#bbb]" />
      <button aria-label="Масштаб" className="mt-[7px]">
        <svg viewBox="0 0 18 18" className="size-[18px]" aria-hidden="true">
          <path d="M2 2l8 8M10 2L2 10" stroke="#999" strokeDasharray="4 3" />
          <path d="M1 1h3L1 4zM8 1h3v3zM1 8v3h3z" fill="#888" />
          <circle cx="11.500" cy="11.500" r="3.500" fill="#f5f5f5" stroke="#777" />
          <path d="M14 14l3 3" stroke="#777" strokeWidth="2" />
        </svg>
      </button>
      <span className="pt-1"><Caret /></span>
      <button aria-label="Параметры панели" className="mt-auto mr-[2px] mb-[2px] size-2 self-end rounded-full border border-[#999]" />
    </div>
  );
}

const VIEW_TOOLS: [string, string][] = [
  ["sheetSize", "Масштаб листа"],
  ["vcCube", "Визуальный стиль"],
  ["vcSun", "Траектория солнца"],
  ["vcShadow", "Тени"],
  ["vcRender", "Визуализация"],
  ["vcCrop", "Обрезать"],
  ["vcCropShow", "Граница обрезки"],
  ["vcLock", "Блокировка"],
  ["vcGlasses", "Временно скрыть"],
  ["vcBulb", "Показать скрытые"],
  ["vcTemp", "Временные свойства"],
  ["vcAnalyt", "Аналитическая модель"],
  ["vcBoxes", "Наборы смещения"],
  ["vcConstraint", "Зависимости"],
];

function Viewport() {
  return (
    <main className="ml-[5px] flex min-w-0 flex-1 flex-col border-t border-l border-[#6e6e6e] bg-white">
      <div className="flex min-h-0 flex-1">
        <div className="relative min-w-0 flex-1 overflow-hidden">
          <Building />
          <div className="absolute top-2 right-1 flex items-center gap-[6px]">
            <button aria-label="Свернуть вид">
              <svg viewBox="0 0 12 12" className="size-3" aria-hidden="true"><path d="M.500 6.500h10v3h-10z" fill="#fff" stroke="#444" /></svg>
            </button>
            <button aria-label="Восстановить вид">
              <svg viewBox="0 0 12 12" className="size-3" aria-hidden="true"><path d="M3.500 3.500v-2h8v7h-2M1.500 3.500h8v7h-8zM4.500 6h2v2h-2z" fill="#fff" stroke="#444" /></svg>
            </button>
            <button aria-label="Закрыть вид">
              <svg viewBox="0 0 12 12" className="size-3" aria-hidden="true">
                <path d="M1.500 1.500h3L6 3.500l1.500-2h3L7.800 6l2.700 4.500h-3L6 8.500l-1.500 2h-3L4.200 6z" fill="#fff" stroke="#444" />
              </svg>
            </button>
          </div>
          <NavBar />
        </div>
        <div className="flex w-4 shrink-0 flex-col items-center justify-between bg-[#efefef] py-1">
          <Arrow dir="up" />
          <div className="size-[14px] border border-[#a0a0a0] bg-linear-to-r from-[#f4f4f4] to-[#d0d0d0]" />
          <Arrow dir="down" />
        </div>
      </div>
      <div className="flex h-[13px] shrink-0 items-start overflow-hidden bg-[#efefef] text-[11px] leading-4 text-[#222]">
        <span className="w-[75px] pl-6 whitespace-nowrap">1 : 100</span>
        <div className="flex gap-[5px]">
          {VIEW_TOOLS.map(([icon, label]) => (
            <button key={icon} aria-label={label}>
              <Icon name={icon} className="size-[15px]" />
            </button>
          ))}
        </div>
        <div className="flex h-full min-w-0 flex-1 items-center justify-between pr-[5px] pl-[9px]">
          <Arrow dir="left" />
          <div className="h-3 w-[14px] border border-[#a0a0a0] bg-linear-to-b from-[#f4f4f4] to-[#d0d0d0]" />
          <Arrow dir="right" />
        </div>
        <div className="w-4 self-stretch" />
      </div>
    </main>
  );
}

/* ---------- properties ---------- */

type Prop = { name: string; kind: "text" | "edit" | "button" | "check"; value?: string; off?: boolean };

const GROUPS: { title: string; props: Prop[] }[] = [
  {
    title: "Графика",
    props: [
      { name: "Масштаб вида", kind: "edit", value: "1 : 100" },
      { name: "Значение ма...", kind: "text", value: "100", off: true },
      { name: "Уровень дета...", kind: "text", value: "Средний" },
      { name: "Видимость ч...", kind: "text", value: "Показать ориг..." },
      { name: "Переопредел...", kind: "button" },
      { name: "Параметры о...", kind: "button" },
      { name: "Дисциплина", kind: "text", value: "Координация" },
      { name: "Показать нев...", kind: "text", value: "По категории" },
      { name: "Графический...", kind: "text", value: "Нет" },
      { name: "Траектория с...", kind: "check" },
    ],
  },
  {
    title: "Границы",
    props: [
      { name: "Обрезать вид", kind: "check" },
      { name: "Показать гра...", kind: "check" },
      { name: "Обрезать анн...", kind: "check" },
      { name: "Дальняя секу...", kind: "check" },
      { name: "Смещение да...", kind: "text", value: "304800.0", off: true },
      { name: "Границы 3D в...", kind: "check" },
    ],
  },
  {
    title: "Камера",
    props: [
      { name: "Параметры в...", kind: "button" },
      { name: "Заблокирова...", kind: "check", off: true },
      { name: "Перспективная", kind: "check", off: true },
      { name: "Высота глаза", kind: "text", value: "6502.2" },
    ],
  },
];

function PropValue({ prop, id }: { prop: Prop; id: string }) {
  if (prop.kind === "edit") {
    return <input id={id} defaultValue={prop.value} className="block h-4 w-[88px] border border-black bg-white px-[3px]" />;
  }
  if (prop.kind === "button") {
    return (
      <button id={id} className="block h-[15px] w-[87px] rounded-[2px] border border-[#555] bg-linear-to-b from-[#fafafa] to-[#c9c9c9] leading-[13px]">
        Изменить...
      </button>
    );
  }
  if (prop.kind === "check") {
    return (
      <input
        id={id}
        type="checkbox"
        disabled={prop.off}
        className="ml-[2px] block size-3 appearance-none border border-[#9a9a9a] bg-linear-to-br from-[#d5d5d5] to-[#fff] disabled:border-[#ccc] disabled:from-[#f2f2f2]"
      />
    );
  }
  return <span className="block px-[2px] whitespace-nowrap">{prop.value}</span>;
}

function Properties() {
  return (
    <aside className="ml-[5px] flex w-[198px] shrink-0 flex-col overflow-hidden bg-[#f0f0f0] text-[11px] text-[#111]">
      <h2 className="flex h-[18px] shrink-0 items-center bg-[#bfcde0] pl-[3px] text-[#4a5666]">Свойства</h2>
      <div className="flex min-h-0 flex-1 flex-col border-t-2 border-l-2 border-[#808080]">
        <div className="flex h-[68px] shrink-0 items-center gap-1 bg-linear-to-b from-white to-[#ececec] pl-[2px] text-[#555]">
          <div className="flex h-[63px] w-[63px] items-center justify-center border border-[#ccc] bg-[#f8f8f8]">
            <svg viewBox="0 0 30 30" className="size-[30px]" aria-hidden="true">
              <path d="M4 13l8 6v10l-8-5zM12 19l13-6v10l-13 6z" fill="#d9dfe8" stroke="#444" />
              <path d="M1 14l8-9 9-4 10 10-13 8L9 8l-6 7z" fill="#b9c2cf" stroke="#444" />
              <path d="M9 8l-6 7 1 1 5-5 5 8z" fill="#eef1f5" stroke="#444" />
              <path d="M7 19l3 1.500V27l-3-1.500z" fill="#555" />
            </svg>
          </div>
          3D вид
        </div>
        <div className="flex h-[23px] shrink-0 items-start gap-[6px]">
          <div className="relative w-[102px] shrink-0">
            <select aria-label="Тип вида" className="block h-[21px] w-full appearance-none rounded-[2px] border border-[#777] bg-linear-to-b from-[#f2f2f2] to-[#d6d6d6] pl-[3px]">
              <option>{"3D вид: {3D}"}</option>
            </select>
            <Caret className="pointer-events-none absolute top-2 right-1 h-[5px] w-[7px]" />
          </div>
          <button className="flex h-5 items-center gap-[5px] whitespace-nowrap">
            <Icon name="typeEdit" />
            Изменить тип
          </button>
        </div>
        <div className="flex min-h-0 flex-1">
          <div className="min-h-0 min-w-0 flex-1 overflow-hidden">
            <table className="w-full table-fixed border-collapse leading-[15px]">
              <colgroup>
                <col />
                <col className="w-[89px]" />
                <col className="w-[12px]" />
              </colgroup>
              {GROUPS.map((group, g) => (
                <tbody key={group.title}>
                  <tr className="h-[19px] bg-[#dcdcdd]">
                    <th colSpan={2} className="p-0 pl-[2px] text-left font-normal">{group.title}</th>
                    <td className="p-0">
                      <svg viewBox="0 0 8 10" className="h-[10px] w-2" aria-hidden="true">
                        <path d="M1.500 4.500L4 2l2.500 2.500M1.500 8.500L4 6l2.500 2.500" fill="none" stroke="#111" strokeWidth="1.300" />
                      </svg>
                    </td>
                  </tr>
                  {group.props.map((prop, i) => {
                    const id = `prop-${g}-${i}`;
                    return (
                      <tr key={prop.name} className={clsx("h-[17px] border-b border-dotted border-[#aaa] bg-white", prop.off && "text-[#808080]")}>
                        <td className="overflow-hidden border-r border-dotted border-[#aaa] p-0 pl-[7px] whitespace-nowrap">
                          <label htmlFor={prop.kind === "text" ? undefined : id}>{prop.name}</label>
                        </td>
                        <td className="overflow-hidden border-r border-dotted border-[#aaa] p-0">
                          <PropValue prop={prop} id={id} />
                        </td>
                        <td className="p-0" />
                      </tr>
                    );
                  })}
                </tbody>
              ))}
            </table>
          </div>
          <div className="w-[5px] shrink-0 border-l border-[#ccc] bg-[#efefef]">
            <div className="mt-[3px] h-4 border border-[#7fb0d8] bg-[#e6f2fb]" />
            <div className="mt-[2px] h-[220px] border border-[#b0b0b0] bg-[#dedede]" />
          </div>
        </div>
        <div className="flex h-[18px] shrink-0 items-end justify-between pl-[2px] whitespace-nowrap">
          <a href="#help" className="self-center text-[#1a6fc4] underline">Справка по свойствам</a>
          <button disabled className="h-[18px] w-[60px] overflow-hidden border border-r-0 border-b-0 border-[#bbb] pl-1 text-left text-[#8a8a8a]">
            Применить
          </button>
        </div>
      </div>
    </aside>
  );
}

export default function App() {
  return (
    <div className="flex h-screen flex-col overflow-hidden bg-black py-4 font-['Open_Sans','Noto_Sans',sans-serif]">
      <Header />
      <Ribbon />
      <div className="h-[26px] shrink-0 bg-[#dfe0e4]" />
      <div className="flex min-h-0 flex-1 bg-[#ebebed]">
        <Browser />
        <Viewport />
        <Properties />
      </div>
    </div>
  );
}
